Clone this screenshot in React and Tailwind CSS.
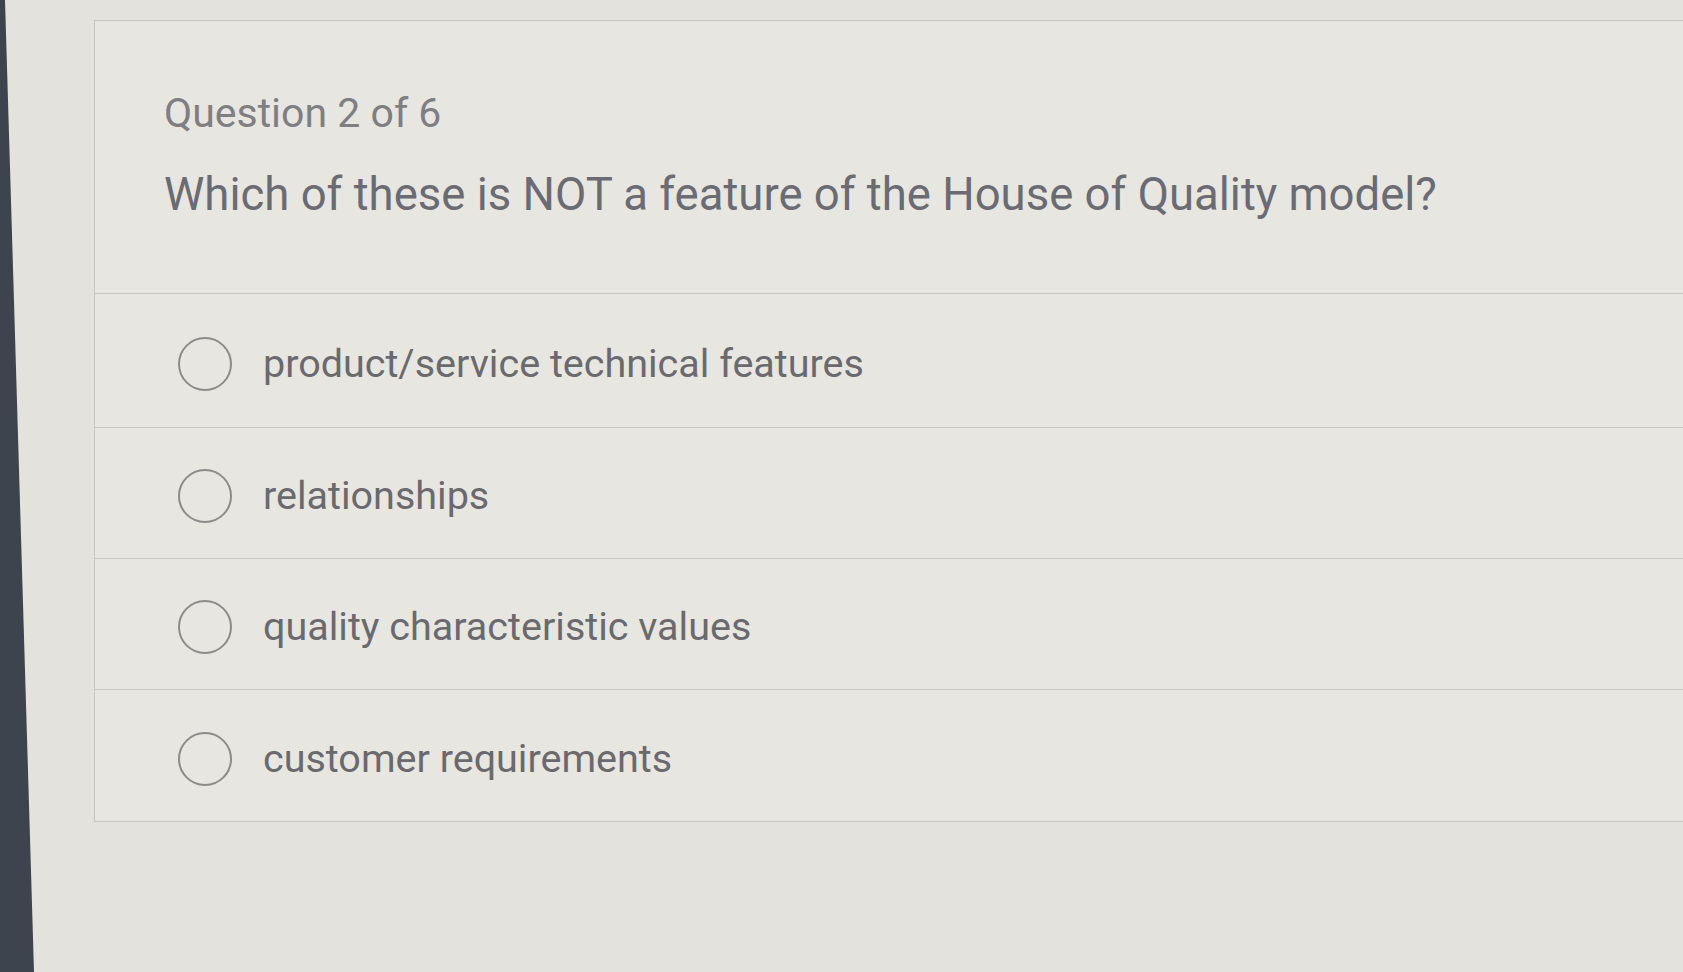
export default function App() {
    const options = [
        'product/service technical features',
        'relationships',
        'quality characteristic values',
        'customer requirements',
    ];

    return (
        <div className="min-h-screen h-[972px] w-full bg-[#e4e2dd] flex overflow-hidden font-['Roboto','Liberation_Sans',sans-serif]">
            {/* dark bezel edge on the left */}
            <div className="w-[34px] shrink-0 bg-[#3e444d] [clip-path:polygon(0_0,5px_0,100%_100%,0_100%)]"></div>

            <div className="flex-1 pt-[20px] pl-[60px]">
                <div className="bg-[#e8e6e1] border-t border-l border-b border-[#c8c6c2]">
                    <div className="h-[273px] border-b border-[#c8c6c2] pl-[69px] pt-[72px]">
                        <p className="text-[41px] leading-none text-[#7e7e83]">Question 2 of 6</p>
                        <h1 className="mt-[38px] text-[45.5px] leading-none text-[#6b6b73]">
                            Which of these is NOT a feature of the House of Quality model?
                        </h1>
                    </div>

                    {options.map((opt, i) => (
                        <div
                            key={opt}
                            className={`${i === 0 ? 'h-[134px]' : 'h-[131px]'} flex items-center pl-[83px] pt-[6px] ${i < options.length - 1 ? 'border-b border-[#c8c6c2]' : ''}`}
                        >
                            <span className="w-[54px] h-[54px] rounded-full border-2 border-[#8c8b89] shrink-0"></span>
                            <span className="ml-[31px] text-[39.5px] leading-none text-[#6a6a6e]">{opt}</span>
                        </div>
                    ))}
                </div>
            </div>
        </div>
    );
}
